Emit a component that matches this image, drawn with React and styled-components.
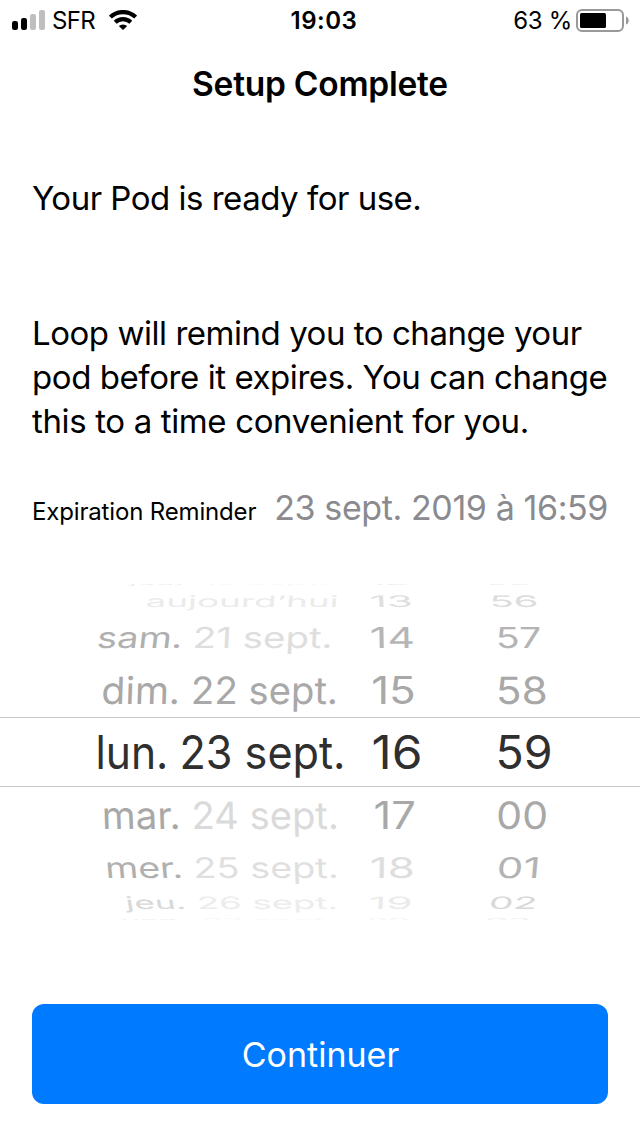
import React from "react";
import styled, { createGlobalStyle } from "styled-components";

const GlobalStyle = createGlobalStyle`
  * { box-sizing: border-box; }
  body {
    margin: 0;
    background: #fff;
    color: #000;
    font-family: Inter, "Liberation Sans", sans-serif;
  }
`;

const Screen = styled.main`
  width: 640px;
  height: 1136px;
  display: flex;
  flex-direction: column;
  overflow: hidden;
  background: #fff;
`;

const StatusBar = styled.header`
  height: 40px;
  padding: 0 11px 0 12px;
  display: grid;
  grid-template-columns: 1fr auto 1fr;
  align-items: center;
  font-size: 24px;
  line-height: 38px;
`;

const StatusGroup = styled.div`
  height: 40px;
  display: flex;
  align-items: center;
  justify-content: ${(p) => (p.$end ? "flex-end" : "flex-start")};
`;

const Carrier = styled.span`
  margin: 0 14px 0 6px;
  padding-top: 2px;
  letter-spacing: -0.7px;
`;

const Clock = styled.span`
  font-weight: 600;
  letter-spacing: 0.5px;
  padding: 2px 0 0 7px;
`;

const Percent = styled.span`
  letter-spacing: -0.3px;
  margin-right: 4px;
  padding-top: 2px;
`;

const Title = styled.h1`
  margin: 0;
  height: 89px;
  font-size: 33.5px;
  font-weight: 600;
  line-height: 89px;
  text-align: center;
  letter-spacing: -0.25px;
`;

const Body = styled.section`
  padding: 0 32px;
  font-size: 33px;
  line-height: 44px;
  white-space: nowrap;
`;

const Ready = styled.p`
  margin: 47px 0 91px;
  letter-spacing: -0.5px;
`;

const Explanation = styled.p`
  margin: 0;
`;

const Line = styled.span`
  display: block;
  letter-spacing: ${(p) => p.$tracking}px;
`;

const Reminder = styled.div`
  height: 44px;
  margin-top: 43px;
  display: flex;
  align-items: baseline;
  justify-content: space-between;
`;

const ReminderLabel = styled.span`
  font-size: 24px;
  letter-spacing: -0.16px;
`;

const ReminderValue = styled.span`
  font-size: 34px;
  letter-spacing: -0.4px;
  color: #8a8a8f;
`;

const Picker = styled.section`
  height: 336px;
  margin-top: 54px;
  display: flex;
  flex-direction: column;
`;

const Row = styled.div`
  flex: none;
  height: ${(p) => p.$height}px;
  padding: ${(p) => p.$pad || 0}px 0 0 95px;
  display: grid;
  grid-template-columns: 85px 190px 126px 1fr;
  grid-template-rows: 100%;
  align-items: center;
  font-size: 46px;
  line-height: 0;
  white-space: nowrap;
`;

const SelectedRow = styled(Row)`
  border-top: 1px solid #c8c8c8;
  border-bottom: 1px solid #c8c8c8;
`;

const EdgeRow = styled(Row)`
  overflow: hidden;
  margin-top: ${(p) => p.$gap || 0}px;
`;

const Value = styled.span`
  justify-self: start;
  color: ${(p) => p.$color};
  transform-origin: 0 50%;
  transform: translate(${(p) => p.$shift}px, ${(p) => p.$drop || 0}px)
    skewX(${(p) => p.$lean || 0}deg) scale(${(p) => p.$sx}, ${(p) => p.$sy});
`;

const Continue = styled.button`
  height: 100px;
  margin: 84px 32px 0;
  border: 0;
  border-radius: 12px;
  background: #007aff;
  color: #fff;
  font: 400 34px/98px Inter, "Liberation Sans", sans-serif;
  padding: 2px 0 0 1px;
`;

/* Each value: [text, colour, horizontal shift, horizontal scale, lean] */
const rows = [
  { edge: true, height: 2, sy: 0.13, drop: -2, values: [
    ["jeu.", "#ececec", 34, 0.7, 0], ["19 sept.", "#f7f7f7", 22, 0.75, 0],
    ["12", "#eeeeee", -1, 0.85, 0], ["55", "#eeeeee", -10, 0.8, 0]] },
  { height: 29, sy: 0.345, values: [
    ["aujourd’hui", "#ebebeb", 50.7, 0.8, -4], ["", "#fff", 0, 1, 0],
    ["13", "#dfdfdf", -0.4, 0.92, 3], ["56", "#dcdcdc", -6.5, 0.863, 6]] },
  { height: 43, sy: 0.63, values: [
    ["sam.", "#b0b0b0", 2.4, 0.827, -7], ["21 sept.", "#dedede", 12.7, 0.838, -3],
    ["14", "#b6b6b6", -0.2, 0.93, 1], ["57", "#b4b4b4", -0.4, 0.85, 3]] },
  { height: 59, pad: 4, sy: 0.817, values: [
    ["dim.", "#a8a8a8", 6.6, 0.848, -2], ["22 sept.", "#a8a8a8", 11, 0.833, -1],
    ["15", "#a8a8a8", 1.2, 0.955, 0], ["58", "#a8a8a8", -0.3, 0.92, 1]] },
  { selected: true, height: 70, sy: 1, values: [
    ["lun.", "#2f2f2f", 0.5, 0.925, 0], ["23 sept.", "#2f2f2f", -0.5, 0.938, 0],
    ["16", "#2f2f2f", 1.6, 1.08, 0], ["59", "#2f2f2f", -0.5, 1.01, 0]] },
  { height: 55, sy: 0.817, values: [
    ["mar.", "#a8a8a8", 6.8, 0.838, 2], ["24 sept.", "#dadada", 11.4, 0.83, 1],
    ["17", "#a8a8a8", 3.6, 0.945, 0], ["00", "#a8a8a8", 0.3, 0.89, -1]] },
  { height: 50, sy: 0.62, values: [
    ["mer.", "#b0b0b0", 10, 0.818, 5], ["25 sept.", "#dfdfdf", 13.4, 0.822, 2],
    ["18", "#dedede", -0.4, 0.96, -1], ["01", "#b3b3b3", 1, 0.91, -5]] },
  { height: 22, sy: 0.37, values: [
    ["jeu.", "#d8d8d8", 30.5, 0.765, 10], ["26 sept.", "#ececec", 16.8, 0.797, 4],
    ["19", "#eaeaea", -1, 0.92, -3], ["02", "#d8d8d8", -7, 0.845, -10]] },
  { edge: true, gap: 4, height: 2, sy: 0.13, drop: 2, values: [
    ["ven.", "#f0f0f0", 26, 0.72, 0], ["27 sept.", "#f8f8f8", 22, 0.76, 0],
    ["20", "#f4f4f4", -3, 0.75, 0], ["03", "#f0f0f0", -11, 0.8, 0]] },
];

function SignalIcon() {
  return (
    <svg width="34" height="22" viewBox="0 0 34 22">
      <rect x="0" y="12" width="6" height="9" rx="2.2" fill="#000" />
      <rect x="9" y="9" width="6" height="12" rx="2.2" fill="#000" />
      <rect x="18" y="5" width="6" height="16" rx="2.2" fill="#bfbfbf" />
      <rect x="27" y="1" width="6" height="20" rx="2.2" fill="#bfbfbf" />
    </svg>
  );
}

function WifiIcon() {
  return (
    <svg width="28" height="20" viewBox="0 0 28 20">
      <g fill="none" stroke="#000" strokeWidth="4.2">
        <path d="M1.4 7.1A18.2 18.2 0 0 1 26.6 7.1" />
        <path d="M6.2 12.2A11.4 11.4 0 0 1 21.8 12.2" />
      </g>
      <path d="M14 20L9.8 16.1A6.3 6.3 0 0 1 18.2 16.1Z" />
    </svg>
  );
}

function BatteryIcon() {
  return (
    <svg width="53" height="24" viewBox="0 0 53 24">
      <rect x="1" y="2" width="46" height="21" rx="5" fill="none" stroke="#999" strokeWidth="2" />
      <rect x="4" y="5" width="26" height="15" rx="1.5" fill="#000" />
      <path d="M50 8.5C53.6 9.5 53.6 15.5 50 16.5Z" fill="#999" />
    </svg>
  );
}

function PickerRow({ row }) {
  const Container = row.selected ? SelectedRow : row.edge ? EdgeRow : Row;
  return (
    <Container $height={row.height} $pad={row.pad} $gap={row.gap}>
      {row.values.map(([text, color, shift, sx, lean], i) => (
        <Value key={i} $color={color} $shift={shift} $drop={row.drop} $sx={sx} $sy={row.sy} $lean={lean}>
          {text}
        </Value>
      ))}
    </Container>
  );
}

export default function App() {
  return (
    <Screen>
      <GlobalStyle />
      <StatusBar>
        <StatusGroup>
          <SignalIcon />
          <Carrier>SFR</Carrier>
          <WifiIcon />
        </StatusGroup>
        <Clock>19:03</Clock>
        <StatusGroup $end>
          <Percent>63 %</Percent>
          <BatteryIcon />
        </StatusGroup>
      </StatusBar>
      <Title>Setup Complete</Title>
      <Body>
        <Ready>Your Pod is ready for use.</Ready>
        <Explanation>
          <Line $tracking={-0.46}>Loop will remind you to change your</Line>
          <Line $tracking={-0.43}>pod before it expires. You can change</Line>
          <Line $tracking={-0.36}>this to a time convenient for you.</Line>
        </Explanation>
        <Reminder>
          <ReminderLabel>Expiration Reminder</ReminderLabel>
          <ReminderValue>23 sept. 2019 à 16:59</ReminderValue>
        </Reminder>
      </Body>
      <Picker>
        {rows.map((row, i) => (
          <PickerRow key={i} row={row} />
        ))}
      </Picker>
      <Continue>Continuer</Continue>
    </Screen>
  );
}
